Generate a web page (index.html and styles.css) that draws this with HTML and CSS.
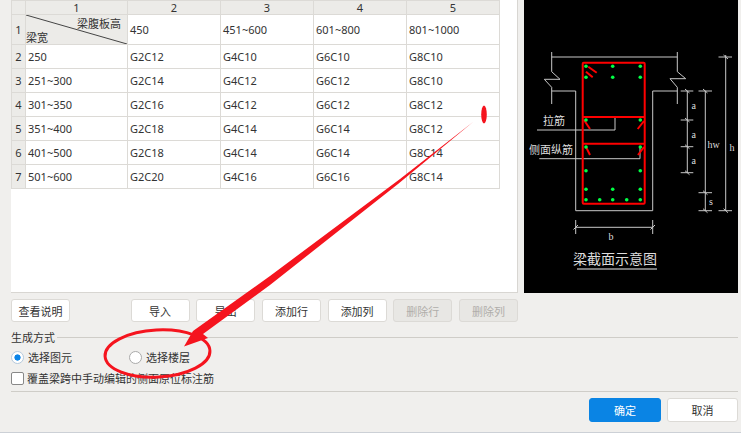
FILE: index.html
```html
<!DOCTYPE html>
<html lang="zh-CN">
<head>
<meta charset="utf-8">
<title>梁截面</title>
<link rel="stylesheet" href="styles.css">
</head>
<body>
<div class="dialog">
  <div class="top">
    <div class="grid-panel">
      <table class="grid">
        <colgroup><col class="c-h"><col class="c-1"><col class="c-n"><col class="c-n"><col class="c-n"><col class="c-n"></colgroup>
        <thead>
          <tr><th></th><th>1</th><th>2</th><th>3</th><th>4</th><th>5</th></tr>
        </thead>
        <tbody>
          <tr class="first"><th>1</th><td class="corner"><svg class="diag" viewBox="0 0 101 29" preserveAspectRatio="none"><line x1="0" y1="0" x2="101" y2="29"/></svg><span class="corner-top">梁腹板高</span><span class="corner-bottom">梁宽</span></td><td>450</td><td>451~600</td><td>601~800</td><td>801~1000</td></tr>
          <tr><th>2</th><td>250</td><td>G2C12</td><td>G4C10</td><td>G6C10</td><td>G8C10</td></tr>
          <tr><th>3</th><td>251~300</td><td>G2C14</td><td>G4C12</td><td>G6C12</td><td>G8C10</td></tr>
          <tr><th>4</th><td>301~350</td><td>G2C16</td><td>G4C12</td><td>G6C12</td><td>G8C12</td></tr>
          <tr><th>5</th><td>351~400</td><td>G2C18</td><td>G4C14</td><td>G6C14</td><td>G8C12</td></tr>
          <tr><th>6</th><td>401~500</td><td>G2C18</td><td>G4C14</td><td>G6C14</td><td>G8C14</td></tr>
          <tr><th>7</th><td>501~600</td><td>G2C20</td><td>G4C16</td><td>G6C16</td><td>G8C14</td></tr>
        </tbody>
      </table>
    </div>
    <svg class="section" viewBox="524 0 214 293">
      <g class="ln">
        <polyline points="551.7,52 551.7,71.7 560,79.3 544.3,79.3 551.7,87.3 551.7,104"/>
        <polyline points="677.3,52 677.3,71.7 685.7,78.7 670,78.7 677.3,87.3 677.3,104"/>
        <line x1="551.7" y1="57" x2="677.3" y2="57"/>
        <polyline points="551.7,91 575.7,91 575.7,210.7 652.7,210.7 652.7,91 677.3,91"/>
        <polyline points="537,130 615,130 615,117"/>
        <polyline points="539.3,158.7 640,158.7 640,147"/>
        <line x1="687.3" y1="91" x2="687.3" y2="172.7"/>
        <line x1="680.7" y1="91" x2="693.3" y2="91"/>
        <line x1="680.7" y1="120" x2="693.3" y2="120"/>
        <line x1="680.7" y1="146.7" x2="693.3" y2="146.7"/>
        <line x1="680.7" y1="172.7" x2="693.3" y2="172.7"/>
        <line x1="705.3" y1="91" x2="705.3" y2="210.7"/>
        <line x1="698.5" y1="91" x2="712" y2="91"/>
        <line x1="698.5" y1="192.7" x2="712" y2="192.7"/>
        <line x1="698.5" y1="210.7" x2="712" y2="210.7"/>
        <line x1="725.7" y1="55" x2="725.7" y2="210.7"/>
        <line x1="718.5" y1="57" x2="732" y2="57"/>
        <line x1="718.5" y1="210.7" x2="732" y2="210.7"/>
        <line x1="575.7" y1="227.3" x2="652.7" y2="227.3"/>
        <line x1="575.7" y1="220" x2="575.7" y2="234"/>
        <line x1="652.7" y1="220" x2="652.7" y2="234"/>
        <line x1="685" y1="89" x2="689.5" y2="93"/><line x1="685" y1="118" x2="689.5" y2="122"/><line x1="685" y1="144.7" x2="689.5" y2="148.7"/><line x1="685" y1="170.7" x2="689.5" y2="174.7"/>
        <line x1="703" y1="89" x2="707.5" y2="93"/><line x1="703" y1="190.7" x2="707.5" y2="194.7"/><line x1="703" y1="208.7" x2="707.5" y2="212.7"/>
        <line x1="723.5" y1="55" x2="728" y2="59"/><line x1="723.5" y1="208.7" x2="728" y2="212.7"/>
        <line x1="573.5" y1="229.5" x2="578" y2="225"/><line x1="650.5" y1="229.5" x2="655" y2="225"/>
      </g>
      <line class="title-line" x1="577" y1="269" x2="657" y2="269"/>
      <g class="rebar">
        <rect x="582.7" y="62.7" width="62" height="141" rx="1"/>
        <line x1="582.7" y1="117" x2="644.7" y2="117"/>
        <line x1="582.7" y1="143.7" x2="644.7" y2="143.7"/>
        <line x1="586" y1="71.7" x2="592.7" y2="77.3"/>
        <line x1="588.3" y1="66.7" x2="596.7" y2="72.7"/>
        <line x1="584" y1="120" x2="590" y2="129"/>
        <line x1="644" y1="121" x2="637.7" y2="129"/>
        <line x1="586" y1="147" x2="590" y2="155"/>
        <line x1="644" y1="147" x2="638" y2="155"/>
      </g>
      <g class="dots">
        <circle cx="586" cy="66.3" r="1.8"/><circle cx="612.7" cy="66.3" r="1.8"/><circle cx="640.3" cy="66.3" r="1.8"/>
        <circle cx="586" cy="77.3" r="1.8"/><circle cx="612.7" cy="77.3" r="1.8"/><circle cx="640.3" cy="77.3" r="1.8"/>
        <circle cx="586" cy="120" r="1.8"/><circle cx="640.3" cy="120" r="1.8"/>
        <circle cx="586" cy="147" r="1.8"/><circle cx="640.3" cy="147" r="1.8"/>
        <circle cx="586" cy="170.7" r="1.8"/><circle cx="640.3" cy="170.7" r="1.8"/>
        <circle cx="586" cy="189.3" r="1.8"/><circle cx="612.7" cy="189.3" r="1.8"/><circle cx="640.3" cy="189.3" r="1.8"/>
        <circle cx="586" cy="199.7" r="1.8"/><circle cx="599.7" cy="199.7" r="1.8"/><circle cx="612.7" cy="199.7" r="1.8"/><circle cx="626.7" cy="199.7" r="1.8"/><circle cx="640.3" cy="199.7" r="1.8"/>
      </g>
      <g class="lbl">
        <text x="543" y="125">拉筋</text>
        <text x="529" y="154">侧面纵筋</text>
      </g>
      <g class="lbl-s">
        <text x="691.5" y="109">a</text>
        <text x="691.5" y="138">a</text>
        <text x="691.5" y="164">a</text>
        <text x="707.5" y="148">hw</text>
        <text x="729.5" y="151">h</text>
        <text x="709" y="205">s</text>
        <text x="608.5" y="240">b</text>
      </g>
      <text class="title" x="573" y="264">梁截面示意图</text>
    </svg>
  </div>
  <div class="actions">
    <button class="btn btn-help" type="button">查看说明</button>
    <div class="action-group">
      <button class="btn" type="button">导入</button>
      <button class="btn" type="button">导出</button>
      <button class="btn" type="button">添加行</button>
      <button class="btn" type="button">添加列</button>
      <button class="btn" type="button" disabled>删除行</button>
      <button class="btn" type="button" disabled>删除列</button>
    </div>
  </div>
  <div class="legend"><span>生成方式</span><i class="rule"></i></div>
  <div class="radios">
    <label class="radio"><span class="dot on"></span>选择图元</label>
    <label class="radio"><span class="dot"></span>选择楼层</label>
  </div>
  <label class="check"><span class="box"></span>覆盖梁跨中手动编辑的侧面原位标注筋</label>
  <div class="footer">
    <button class="btn btn-primary" type="button">确定</button>
    <button class="btn btn-cancel" type="button">取消</button>
  </div>
</div>
<svg class="annot" viewBox="0 0 741 442">
  <ellipse class="a-dot" cx="484" cy="114.5" rx="2.8" ry="9"/>
  <ellipse class="a-ring" cx="157.5" cy="353.5" rx="52.5" ry="23.5" transform="rotate(-3 157.5 353.5)"/>
  <polygon class="a-arrow" points="473,122 400,179 270,276 193,331 184,346.5 208,338 203,334 270,285 398,184"/>
</svg>
</body>
</html>
```
FILE: styles.css
```css
* { box-sizing: border-box; }
html, body { margin: 0; padding: 0; background: #fff; }
body {
  position: relative;
  width: 741px;
  height: 442px;
  overflow: hidden;
  font-family: "Noto Sans CJK SC", "Noto Sans", sans-serif;
  font-size: 11px;
  color: #333;
}
.dialog {
  height: 433px;
  background: #f0efed;
  border-bottom: 1px solid #ccd0d6;
  padding: 0 3px 0 11px;
  display: flex;
  flex-direction: column;
}
.top { display: flex; gap: 6px; height: 293px; }
.grid-panel {
  width: 507px;
  background: #fff;
  border: 1px solid #d8d6d2;
  border-top: 0;
  border-left: 0;
}
.grid {
  border-collapse: collapse;
  table-layout: fixed;
  width: 489px;
  font-family: "Noto Sans", "Noto Sans CJK SC", sans-serif;
  font-size: 11px;
  background: #fff;
}
.c-h { width: 14px; }
.c-1 { width: 102px; }
.c-n { width: 93px; }
.grid th, .grid td { border: 1px solid #dcdad6; padding: 0; }
.grid thead th {
  height: 14px;
  line-height: 12px;
  background: #ecebe8;
  font-weight: 400;
  text-align: center;
}
.grid tbody th { background: #ecebe8; font-weight: 400; text-align: center; }
.grid tbody tr { height: 24px; }
.grid tbody tr.first { height: 30px; }
.grid td { padding-left: 2px; white-space: nowrap; }
.corner { position: relative; background: #ecebe8; }
.diag { position: absolute; inset: 0; width: 100%; height: 100%; }
.diag line { stroke: #444; stroke-width: 1; }
.corner-top { position: absolute; right: 6px; top: 0; font-family: "Noto Sans CJK SC", sans-serif; line-height: 16px; }
.corner-bottom { position: absolute; left: 0; bottom: 0; font-family: "Noto Sans CJK SC", sans-serif; line-height: 14px; }
.section { width: 214px; height: 293px; background: #000; display: block; border: 0; }
.ln line, .ln polyline { fill: none; stroke: #c8c8c8; stroke-width: 1; }
.title-line { stroke: #eee; stroke-width: 1.2; }
.rebar rect, .rebar line { fill: none; stroke: #f00; stroke-width: 2; }
.dots circle { fill: #0f4; }
.lbl text { fill: #ddd; font-size: 11px; font-family: "Noto Sans CJK SC", sans-serif; }
.lbl-s text { fill: #ddd; font-size: 10px; font-family: "Liberation Serif", serif; }
.title { fill: #ddd; font-size: 14px; font-family: "Noto Sans CJK SC", sans-serif; }
.actions { display: flex; justify-content: space-between; margin-top: 6px; width: 507px; }
.action-group { display: flex; gap: 6.7px; }
.btn {
  height: 23px;
  width: 59px;
  padding: 0;
  background: #fff;
  border: 1px solid #dcdad6;
  border-radius: 3px;
  font-family: "Noto Sans CJK SC", sans-serif;
  font-size: 11px;
  color: #333;
}
.btn:disabled { background: #e8e7e4; color: #b0aeaa; border-color: #dcdad6; }
.legend { display: flex; align-items: center; gap: 2px; margin-top: 6px; height: 18px; }
.legend span { line-height: 18px; }
.rule { flex: 1; height: 1px; background: #cfcdc8; }
.radios { display: flex; margin-top: 3px; height: 16px; align-items: center; }
.radio { display: flex; align-items: center; gap: 4px; width: 118px; }
.dot { width: 13px; height: 13px; border: 1px solid #aaa; border-radius: 50%; background: #fff; display: block; }
.dot.on { border-color: #b5c9dc; background: radial-gradient(circle, #0a84e8 0 2.8px, #fff 3.4px); }
.check { display: flex; align-items: center; gap: 3px; margin-top: 6px; height: 14px; }
.box { width: 13px; height: 13px; border: 1px solid #888; border-radius: 2px; background: #fff; display: block; }
.footer {
  display: flex;
  justify-content: flex-end;
  gap: 6px;
  margin-top: 6px;
  padding-top: 6px;
  border-top: 1px solid #cfcdc8;
}
.btn-primary { width: 72px; height: 24px; background: #0a84e4; border-color: #0a84e4; color: #fff; }
.btn-cancel { width: 71px; height: 24px; }
.annot { position: absolute; left: 0; top: 0; width: 741px; height: 442px; pointer-events: none; }
.a-dot, .a-arrow { fill: #f5141e; }
.a-ring { fill: none; stroke: #f5141e; stroke-width: 3; }
```
